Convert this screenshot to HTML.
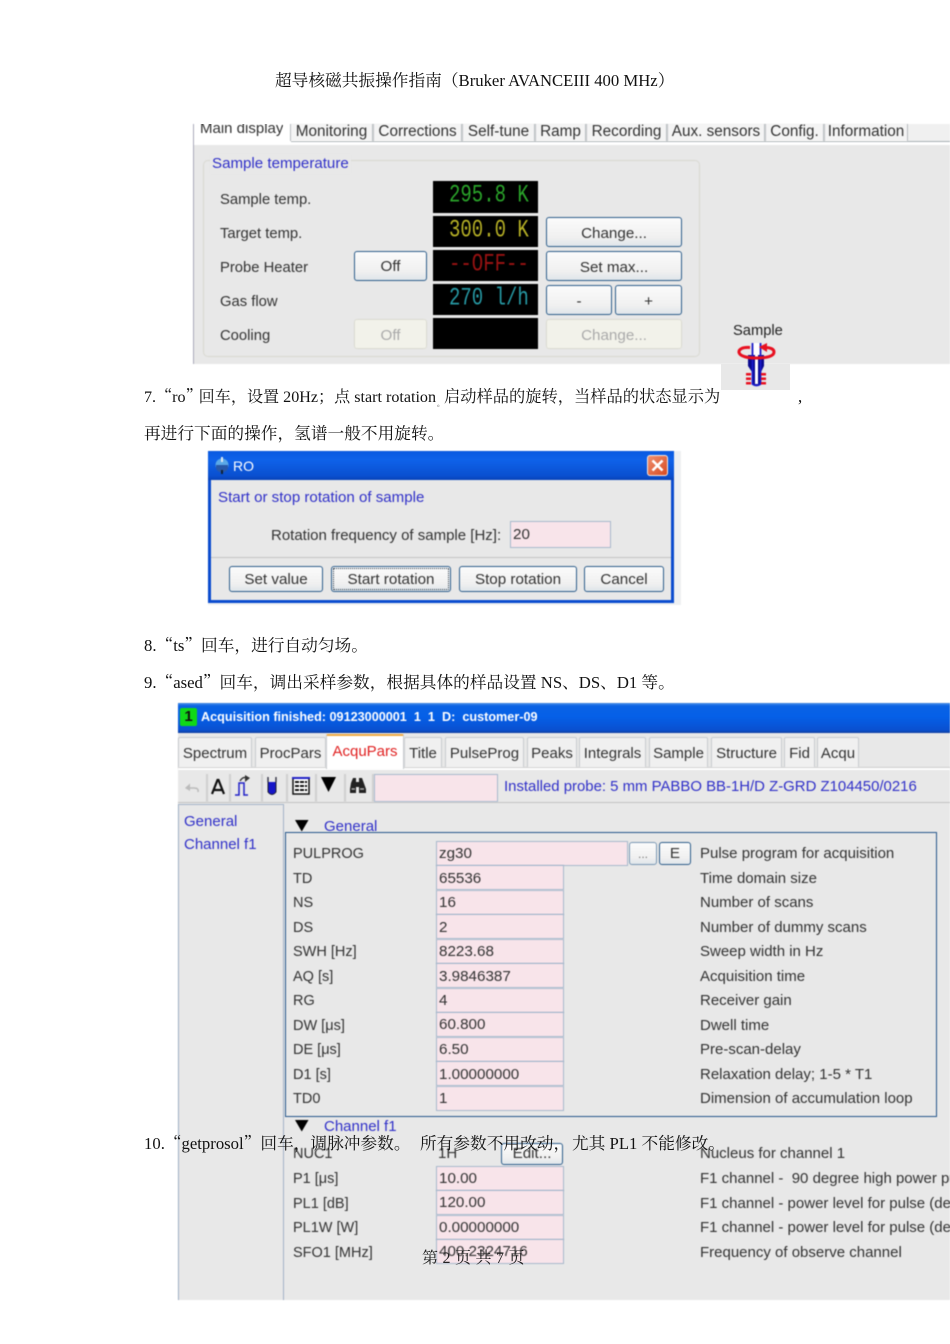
<!DOCTYPE html>
<html><head><meta charset="utf-8"><style>
html,body{margin:0;padding:0;background:#fff}
body{width:950px;height:1344px;position:relative;overflow:hidden}
div,svg{position:absolute;box-sizing:border-box}
.s{font-family:"Liberation Serif","Noto Serif CJK SC",serif;font-size:16.7px;line-height:20px;color:#111;white-space:nowrap;margin-top:2px}
.q{font-family:"Noto Serif CJK SC",serif}
.t{font-family:"Liberation Sans",sans-serif;font-size:15px;line-height:20px;color:#333;white-space:nowrap;margin-top:1px}
.l{font-size:14.5px}
.b{color:#3030c8}
.sh{filter:blur(.4px)}
.btn{border:1.5px solid #2f5f8c;border-radius:3px;background:linear-gradient(#fbfbfb,#f0f0f0 70%,#dfe5ea);font-family:"Liberation Sans",sans-serif;font-size:15.2px;color:#333;text-align:center;white-space:nowrap}
.dis{border:1px solid #dcdcd2;background:#f2f2ea;color:#aaa}
.seg{background:#000;overflow:hidden}
.seg div{left:16px;top:-1px;font-family:"Liberation Mono",monospace;font-size:19px;line-height:31px;white-space:pre;transform:scaleY(1.3);opacity:.9}
.tab{border:1px solid #c8ccd0;border-bottom:0;background:#f0f0f0;border-radius:2px 2px 0 0;top:737px;height:30px;line-height:32px;text-align:center;font-family:"Liberation Sans",sans-serif;font-size:15px;color:#333;white-space:nowrap}
.tb{top:124px;height:17px;line-height:15px;overflow:hidden;text-align:center;border-left:1.5px solid #b8bcc0;border-right:1.5px solid #b8bcc0;background:#f4f4f4;font-family:"Liberation Sans",sans-serif;font-size:15.3px;color:#333;white-space:nowrap}
.in{background:#f8e4ea;border:1.5px solid #a9b9cd;font-family:"Liberation Sans",sans-serif;font-size:15.2px;color:#333;padding-left:2px;white-space:nowrap;overflow:hidden}
.sep{width:2px;top:774px;height:28px;background:#d0d0d0}
</style></head><body>

<div class="s" style="left:275px;top:69px">超导核磁共振操作指南（Bruker AVANCEIII 400 MHz）</div>

<!-- top screenshot -->
<div class="sh" style="left:193px;top:124px;width:757px;height:240px;background:#e8e8e8;overflow:hidden">
<div style="left:0;top:0;width:1px;height:240px;background:#aab"></div>
<div style="left:1px;top:0;width:756px;height:21px;background:#fff"></div>
<div style="left:98px;top:0;width:659px;height:18px;background:#f0f0f0;border-bottom:1px solid #a8b0b4"></div>
</div>
<div class="t sh" style="left:200px;top:119px;height:20px;clip-path:inset(5px 0 0 0);margin:0">Main display</div>
<div class="tb sh" style="left:290px;width:83px">Monitoring</div>
<div class="tb sh" style="left:373px;width:89px">Corrections</div>
<div class="tb sh" style="left:462px;width:73px">Self-tune</div>
<div class="tb sh" style="left:535px;width:51px">Ramp</div>
<div class="tb sh" style="left:586px;width:81px">Recording</div>
<div class="tb sh" style="left:667px;width:98px">Aux. sensors</div>
<div class="tb sh" style="left:765px;width:59px">Config.</div>
<div class="tb sh" style="left:824px;width:84px">Information</div>

<div class="sh" style="left:203px;top:160px;width:497px;height:197px;border:1.5px solid #d9d9d2;border-radius:5px"></div>
<div class="t b sh" style="left:210px;top:152.500px;background:#e8e8e8;padding:0 2px;font-size:15.1px">Sample temperature</div>

<div class="t sh" style="left:220px;top:189px;font-size:14.8px">Sample temp.</div>
<div class="t sh" style="left:220px;top:223px;font-size:14.8px">Target temp.</div>
<div class="t sh" style="left:220px;top:257px;font-size:14.8px">Probe Heater</div>
<div class="t sh" style="left:220px;top:291px;font-size:14.8px">Gas flow</div>
<div class="t sh" style="left:220px;top:325px;font-size:14.8px">Cooling</div>

<div class="seg sh" style="left:433px;top:181px;width:105px;height:32px"><div style="color:#2fb52f">295.8 K</div></div>
<div class="seg sh" style="left:433px;top:216px;width:105px;height:31px"><div style="color:#c9c22a">300.0 K</div></div>
<div class="seg sh" style="left:433px;top:250px;width:105px;height:31px"><div style="color:#a81414">--OFF--</div></div>
<div class="seg sh" style="left:433px;top:284px;width:105px;height:31px"><div style="color:#2ba9b5">270 l/h</div></div>
<div class="seg sh" style="left:433px;top:318px;width:105px;height:31px"></div>

<div class="btn sh" style="left:354px;top:251px;width:73px;height:30px;line-height:30px">Off</div>
<div class="btn dis sh" style="left:354px;top:319px;width:73px;height:30px;line-height:31px">Off</div>
<div class="btn sh" style="left:546px;top:217px;width:136px;height:30px;line-height:31px">Change...</div>
<div class="btn sh" style="left:546px;top:251px;width:136px;height:30px;line-height:31px">Set max...</div>
<div class="btn sh" style="left:546px;top:285px;width:66px;height:30px;line-height:31px">-</div>
<div class="btn sh" style="left:615px;top:285px;width:67px;height:30px;line-height:31px">+</div>
<div class="btn dis sh" style="left:546px;top:319px;width:136px;height:30px;line-height:31px">Change...</div>

<div style="left:721px;top:364px;width:69px;height:26px;background:#e8e8e8"></div>
<div class="t sh" style="left:733px;top:320px;color:#222;font-size:14.7px">Sample</div>
<svg class="sh" style="left:737px;top:342px" width="40" height="46" viewBox="0 0 40 46">
<path d="M11 13H27V24L24 30V42Q19.500 46 15 42V30L11 24Z" fill="#0a0a90"/>
<path d="M15 1V13H23V1Z" fill="#fff"/>
<path d="M15.500 1V42Q19.500 45 23.500 42V1" fill="none" stroke="#1a1ac8" stroke-width="1.800"/>
<rect x="18" y="1" width="3" height="41" fill="#fff"/>
<path d="M13 5.500C5 5 1.500 7.500 2 10.500C3 14.500 11 16 19 16C29 16 37 14.500 37 10C37 7 33 5.500 29 5.500" fill="none" stroke="#e81020" stroke-width="3"/>
<path d="M22 5L30 1V10Z" fill="#e81020"/>
<path d="M9 31h5v2.500H9zM9 35.500h5v2.500H9zM9 40h5v2.500H9zM24 31h5v2.500H24zM24 35.500h5v2.500H24zM24 40h5v2.500H24z" fill="#e81020"/>
</svg>

<div class="s" style="left:144px;top:383px;font-size:16.1px">7.<span class="q">“</span>ro<span class="q" style="margin-right:-3px">”</span>回车，设置 20Hz；点 start rotation</div>
<div class="s" style="left:437px;top:392px;font-size:7px">。</div>
<div class="s" style="left:444px;top:385px;font-size:16.25px">启动样品的旋转，当样品的状态显示为</div>
<div class="s" style="left:798px;top:385px">,</div>
<div class="s" style="left:144px;top:422px">再进行下面的操作，氢谱一般不用旋转。</div>

<!-- RO dialog -->
<div class="sh" style="left:208px;top:451px;width:473px;height:154px;background:#eef0f2"></div>
<div class="sh" style="left:208px;top:451px;width:466px;height:152px;background:#e8e8e8;border:3px solid #0b4ccf;border-top:0">
<div style="left:-3px;top:0;width:466px;height:29px;background:linear-gradient(#0a5ae0,#0f62ea 30%,#0a50d0 85%,#0842b8)"></div>
<div style="left:0;top:106px;width:460px;height:1px;background:#c4c4c4"></div>
</div>
<svg class="sh" style="left:213px;top:456px" width="19" height="18" viewBox="0 0 19 18"><circle cx="9" cy="9" r="6.500" fill="#5aa8e8"/><path d="M3 9h12v2.500a6 5 0 0 1-12 0z" fill="#2858a8"/><path d="M8 1h2v5H8z" fill="#dfe8f0"/><path d="M8 14h2v4H8z" fill="#123"/></svg>
<div class="t sh" style="left:233px;top:455px;color:#fff;font-size:14px">RO</div>
<div class="sh" style="left:647px;top:455px;width:21px;height:21px;border:1px solid #f4e8e0;border-radius:3px;background:linear-gradient(135deg,#ee9070,#d84a20)"></div>
<svg class="sh" style="left:647px;top:455px" width="21" height="21"><path d="M5.500 5.500L15.500 15.500M15.500 5.500L5.500 15.500" stroke="#fff" stroke-width="2.600"/></svg>
<div class="t b sh" style="left:218px;top:487px;font-size:15.1px">Start or stop rotation of sample</div>
<div class="t sh" style="left:271px;top:525px;font-size:15px">Rotation frequency of sample [Hz]:</div>
<div class="in sh" style="left:510px;top:521px;width:101px;height:27px;line-height:25px">20</div>
<div class="btn sh" style="left:229px;top:566px;width:94px;height:26px;line-height:25px">Set value</div>
<div class="btn sh" style="left:331px;top:566px;width:120px;height:26px;line-height:25px;outline:1px dotted #234;outline-offset:-3px">Start rotation</div>
<div class="btn sh" style="left:459px;top:566px;width:118px;height:26px;line-height:25px">Stop rotation</div>
<div class="btn sh" style="left:584px;top:566px;width:80px;height:26px;line-height:25px">Cancel</div>

<div class="s" style="left:144px;top:632px">8.<span class="q">“</span>ts<span class="q">”</span>回车，进行自动匀场。</div>
<div class="s" style="left:144px;top:669px">9.<span class="q">“</span>ased<span class="q">”</span>回车，调出采样参数，根据具体的样品设置 NS、DS、D1 等。</div>

<!-- acquisition window -->
<div class="sh" style="left:178px;top:703px;width:772px;height:597px;background:#e8e8e8"></div>
<div class="sh" style="left:178px;top:703px;width:772px;height:30px;background:linear-gradient(#4a90e8 0,#0a62e4 10%,#0560e8 45%,#0a50d0 90%,#1040a0)"></div>
<div class="sh" style="left:180px;top:708px;width:17px;height:18px;background:#10d818;border-radius:2px;font:bold 15px/18px 'Liberation Sans',sans-serif;color:#111;text-align:center">1</div>
<div class="t sh" style="left:201px;top:706px;color:#fff;font-size:12.65px;font-weight:bold;white-space:pre">Acquisition finished: 09123000001  1  1  D:  customer-09</div>
<div class="sh" style="left:178px;top:767px;width:772px;height:3px;background:linear-gradient(#bbb,#fff 50%,#fff)"></div>
<div class="tab sh" style="left:178px;width:74px">Spectrum</div>
<div class="tab sh" style="left:255px;width:71px">ProcPars</div>
<div class="tab sh" style="left:326px;width:78px;top:734px;height:35px;background:#fff;border-top:2px solid #eeaa44;color:#e02020;line-height:31px">AcquPars</div>
<div class="tab sh" style="left:404px;width:38px">Title</div>
<div class="tab sh" style="left:445px;width:79px">PulseProg</div>
<div class="tab sh" style="left:527px;width:50px">Peaks</div>
<div class="tab sh" style="left:579px;width:67px">Integrals</div>
<div class="tab sh" style="left:649px;width:59px">Sample</div>
<div class="tab sh" style="left:711px;width:71px">Structure</div>
<div class="tab sh" style="left:784px;width:31px">Fid</div>
<div class="tab sh" style="left:817px;width:42px">Acqu</div>

<div class="sh" style="left:178px;top:802px;width:772px;height:1px;background:#c4c4c4"></div>
<div class="sep sh" style="left:206px"></div><div class="sep sh" style="left:229px"></div><div class="sep sh" style="left:261px"></div><div class="sep sh" style="left:286px"></div><div class="sep sh" style="left:315px"></div><div class="sep sh" style="left:344px"></div><div class="sep sh" style="left:372px"></div>
<svg class="sh" style="left:178px;top:770px" width="200" height="36" viewBox="0 0 200 36">
<path d="M8 18H16Q21 18 20 22" fill="none" stroke="#bbb" stroke-width="1.500"/><path d="M7 18L12 13.500V21Z" fill="#bbb"/>
<path d="M34 24L39.500 10H40.500L46 24M36 20H44" fill="none" stroke="#111" stroke-width="2.200"/>
<path d="M57 25H61V13H66V25H70" fill="none" stroke="#2222c8" stroke-width="1.500"/>
<path d="M62 11Q65 6 69 8" fill="none" stroke="#333" stroke-width="1.400"/><path d="M67 5L72 8L67 12Z" fill="#333"/>
<path d="M90 8V22Q94 27 98 22V8" fill="#1616c8" stroke="#223" stroke-width="1"/><rect x="90" y="6" width="8" height="6" fill="#e8e8e8"/><path d="M90 7V12M98 7V12" stroke="#334" stroke-width="1.400"/>
<rect x="115" y="8" width="16" height="16" fill="#fff" stroke="#111" stroke-width="1.500"/><rect x="114" y="7" width="18" height="2" fill="#2222c8"/><path d="M117 12h12M117 16h12M117 20h12" stroke="#111" stroke-width="2" stroke-dasharray="4 1"/>
<path d="M143 7H158L150.500 22Z" fill="#000"/>
<path d="M173 13L175 8H178V12H181V8H184L188 19V23H181V17H178V23H172V19Z" fill="#222"/><path d="M173.500 19h3.500M182 19h4" stroke="#aaa" stroke-width="1.500"/>
</svg>
<div class="in sh" style="left:374px;top:774px;width:124px;height:28px"></div>
<div class="t b sh" style="left:504px;top:776px;font-size:14.93px">Installed probe: 5 mm PABBO BB-1H/D Z-GRD Z104450/0216</div>

<div class="sh" style="left:178px;top:804px;width:106px;height:496px;border:1.5px solid #a4b4c8;border-bottom:0"></div>
<div class="t b sh" style="left:184px;top:811px">General</div>
<div class="t b sh" style="left:184px;top:834px">Channel f1</div>

<svg class="sh" style="left:295px;top:820px" width="14" height="12"><path d="M0 0H13.500L6.750 11.500Z" fill="#000"/></svg>
<div class="t b sh" style="left:324px;top:816px;height:15px;overflow:hidden">General</div>
<div class="sh" style="left:285px;top:832px;width:652px;height:285px;border:1.5px solid #28588c"></div>

<div class="t l sh" style="left:293px;top:843px">PULPROG</div><div class="in sh" style="left:436px;top:841px;width:192px;height:25px;line-height:23px">zg30</div><div class="btn sh" style="left:629px;top:842px;width:28px;height:23px;line-height:22px;font-size:12px;color:#777;border-color:#7a98b4">...</div><div class="btn sh" style="left:659px;top:842px;width:32px;height:23px;line-height:22px">E</div><div class="t sh" style="left:700px;top:843px">Pulse program for acquisition</div>
<div class="t l sh" style="left:293px;top:868px">TD</div><div class="in sh" style="left:436px;top:865px;width:128px;height:25px;line-height:25px">65536</div><div class="t sh" style="left:700px;top:868px">Time domain size</div>
<div class="t l sh" style="left:293px;top:892px">NS</div><div class="in sh" style="left:436px;top:890px;width:128px;height:25px;line-height:23px">16</div><div class="t sh" style="left:700px;top:892px">Number of scans</div>
<div class="t l sh" style="left:293px;top:917px">DS</div><div class="in sh" style="left:436px;top:914px;width:128px;height:25px;line-height:25px">2</div><div class="t sh" style="left:700px;top:917px">Number of dummy scans</div>
<div class="t l sh" style="left:293px;top:941px">SWH [Hz]</div><div class="in sh" style="left:436px;top:939px;width:128px;height:25px;line-height:23px">8223.68</div><div class="t sh" style="left:700px;top:941px">Sweep width in Hz</div>
<div class="t l sh" style="left:293px;top:966px">AQ [s]</div><div class="in sh" style="left:436px;top:963px;width:128px;height:25px;line-height:25px">3.9846387</div><div class="t sh" style="left:700px;top:966px">Acquisition time</div>
<div class="t l sh" style="left:293px;top:990px">RG</div><div class="in sh" style="left:436px;top:988px;width:128px;height:25px;line-height:23px">4</div><div class="t sh" style="left:700px;top:990px">Receiver gain</div>
<div class="t l sh" style="left:293px;top:1015px">DW [μs]</div><div class="in sh" style="left:436px;top:1012px;width:128px;height:25px;line-height:24px">60.800</div><div class="t sh" style="left:700px;top:1015px">Dwell time</div>
<div class="t l sh" style="left:293px;top:1039px">DE [μs]</div><div class="in sh" style="left:436px;top:1037px;width:128px;height:25px;line-height:23px">6.50</div><div class="t sh" style="left:700px;top:1039px">Pre-scan-delay</div>
<div class="t l sh" style="left:293px;top:1064px">D1 [s]</div><div class="in sh" style="left:436px;top:1061px;width:128px;height:25px;line-height:25px">1.00000000</div><div class="t sh" style="left:700px;top:1064px">Relaxation delay; 1-5 * T1</div>
<div class="t l sh" style="left:293px;top:1088px">TD0</div><div class="in sh" style="left:436px;top:1086px;width:128px;height:25px;line-height:23px">1</div><div class="t sh" style="left:700px;top:1088px">Dimension of accumulation loop</div>

<svg class="sh" style="left:295px;top:1120px" width="14" height="12"><path d="M0 0H13.500L6.750 11.500Z" fill="#000"/></svg>
<div class="t b sh" style="left:324px;top:1116px">Channel f1</div>

<div class="t l sh" style="left:293px;top:1143px">NUC1</div><div class="t sh" style="left:438px;top:1143px">1H</div><div class="btn sh" style="left:501px;top:1143px;width:62px;height:22px;line-height:20px">Edit...</div><div class="t sh" style="left:700px;top:1143px">Nucleus for channel 1</div>
<div class="t l sh" style="left:293px;top:1168px">P1 [μs]</div><div class="in sh" style="left:436px;top:1166px;width:128px;height:25px;line-height:24px">10.00</div><div class="t sh" style="left:700px;top:1168px;white-space:pre">F1 channel -  90 degree high power pulse</div>
<div class="t l sh" style="left:293px;top:1193px">PL1 [dB]</div><div class="in sh" style="left:436px;top:1190px;width:128px;height:25px;line-height:24px">120.00</div><div class="t sh" style="left:700px;top:1193px">F1 channel - power level for pulse (default)</div>
<div class="t l sh" style="left:293px;top:1217px">PL1W [W]</div><div class="in sh" style="left:436px;top:1215px;width:128px;height:25px;line-height:23px">0.00000000</div><div class="t sh" style="left:700px;top:1217px">F1 channel - power level for pulse (default)</div>
<div class="t l sh" style="left:293px;top:1242px">SFO1 [MHz]</div><div class="in sh" style="left:436px;top:1239px;width:128px;height:25px;line-height:24px">400.2324716</div><div class="t sh" style="left:700px;top:1242px">Frequency of observe channel</div>

<div class="s" style="left:144px;top:1130px">10.<span class="q">“</span>getprosol<span class="q">”</span>回车，调脉冲参数。</div>
<div class="s" style="left:420px;top:1132px">所有参数不用改动，</div>
<div class="s" style="left:572px;top:1132px">尤其 PL1 不能修改。</div>
<div class="s" style="left:422px;top:1247px;font-size:16px;color:#222;word-spacing:.5px">第 2 页 共 7 页</div>
</body></html>
